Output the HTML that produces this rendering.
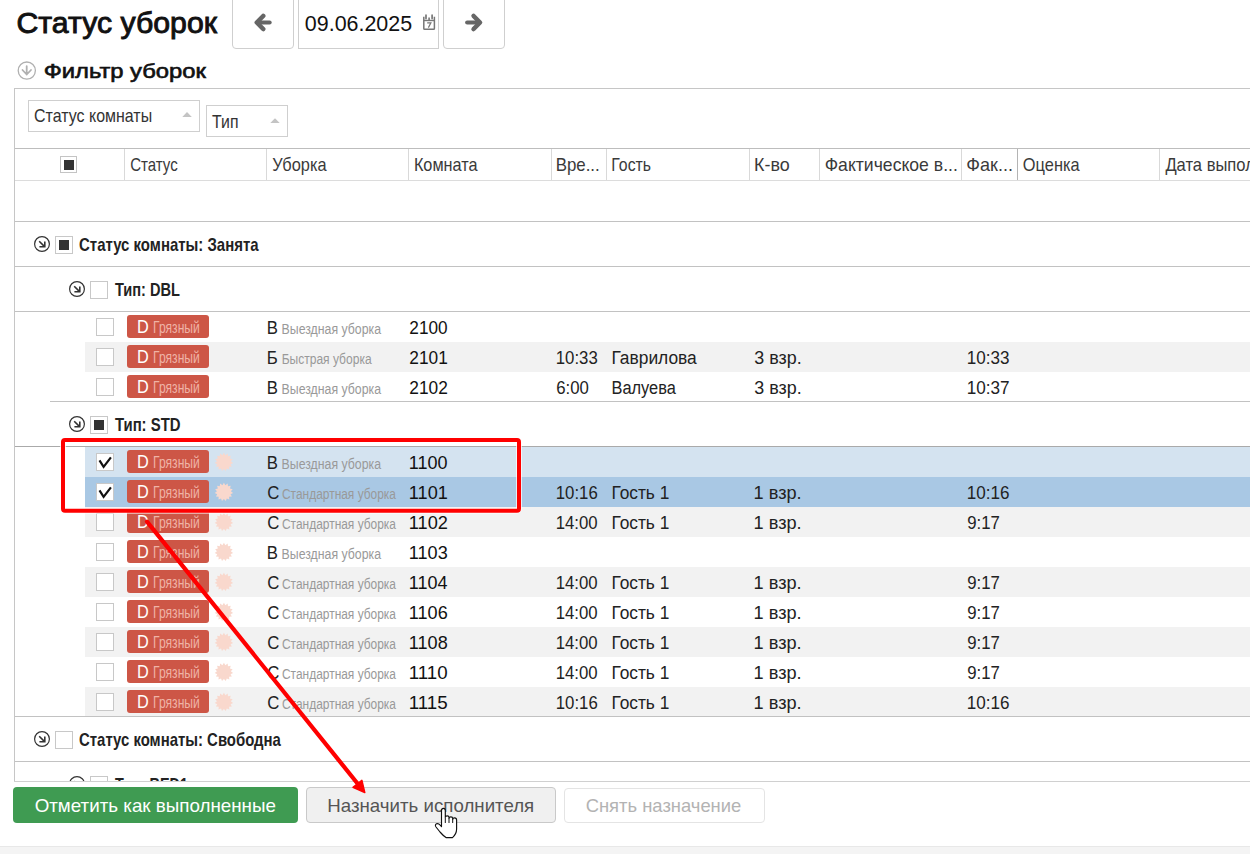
<!DOCTYPE html>
<html><head><meta charset="utf-8"><title>Статус уборок</title>
<style>
html,body{margin:0;padding:0;}
body{width:1250px;height:854px;overflow:hidden;position:relative;background:#fff;font-family:"Liberation Sans",sans-serif;}
#page div{position:absolute;}
#page > svg{position:absolute;left:0;top:0;}
#clip{position:absolute;left:0;top:0;width:1250px;height:781px;overflow:hidden;}
</style></head><body><div id="page">
<div id="clip">
<div style="left:232px;top:-6px;width:62px;height:55px;border:1px solid #cfcfcf;border-radius:4px;background:#fff;box-sizing:border-box"></div>
<div style="left:298px;top:-6px;width:141px;height:55px;border:1px solid #cfcfcf;background:#fff;box-sizing:border-box"></div>
<div style="left:443px;top:-6px;width:62px;height:55px;border:1px solid #cfcfcf;border-radius:4px;background:#fff;box-sizing:border-box"></div>
<div style="left:14px;top:88px;width:1300px;height:694px;border-left:1px solid #c6c6c6;border-top:1px solid #c6c6c6;box-sizing:border-box"></div>
<div style="left:27.5px;top:99.5px;width:172.5px;height:32px;border:1px solid #cfcfcf;box-sizing:border-box;background:#fff"></div>
<div style="left:205.5px;top:105px;width:82px;height:32px;border:1px solid #cfcfcf;box-sizing:border-box;background:#fff"></div>
<div style="left:15px;top:148px;width:1300px;height:1px;background:#bdbdbd"></div>
<div style="left:15px;top:180px;width:1300px;height:1px;background:#dcdcdc"></div>
<div style="left:124px;top:149px;width:1px;height:31px;background:#d9d9d9"></div>
<div style="left:266px;top:149px;width:1px;height:31px;background:#d9d9d9"></div>
<div style="left:408px;top:149px;width:1px;height:31px;background:#d9d9d9"></div>
<div style="left:550.5px;top:149px;width:1px;height:31px;background:#d9d9d9"></div>
<div style="left:606px;top:149px;width:1px;height:31px;background:#d9d9d9"></div>
<div style="left:748.5px;top:149px;width:1px;height:31px;background:#d9d9d9"></div>
<div style="left:819px;top:149px;width:1px;height:31px;background:#d9d9d9"></div>
<div style="left:961px;top:149px;width:1px;height:31px;background:#d9d9d9"></div>
<div style="left:1017px;top:149px;width:1px;height:31px;background:#b4b4b4"></div>
<div style="left:1159px;top:149px;width:1px;height:31px;background:#d9d9d9"></div>
<div style="left:60px;top:156px;width:17px;height:17px;border:1px solid #c4c4c4;box-sizing:border-box;background:#fff"></div>
<div style="left:63.6px;top:160px;width:10.2px;height:9.6px;background:#333"></div>
<div style="left:15px;top:221px;width:1300px;height:1px;background:#c2c2c2"></div>
<div style="left:55px;top:236px;width:17.5px;height:17.5px;border:1px solid #c8c8c8;box-sizing:border-box;background:#fff"></div>
<div style="left:58.8px;top:240px;width:10px;height:9.8px;background:#333"></div>
<div style="left:15px;top:266px;width:1300px;height:1px;background:#c2c2c2"></div>
<div style="left:90.2px;top:281px;width:17.5px;height:17.5px;border:1px solid #c8c8c8;box-sizing:border-box;background:#fff"></div>
<div style="left:15px;top:311px;width:1300px;height:1px;background:#c2c2c2"></div>
<div style="left:96.1px;top:318px;width:17.5px;height:17.5px;border:1px solid #c8c8c8;box-sizing:border-box;background:#fff"></div>
<div style="left:127px;top:315.3px;width:82px;height:22.5px;background:#cd5646;border-radius:3px"></div>
<div style="left:85px;top:342px;width:1300px;height:30px;background:#f2f2f2"></div>
<div style="left:96.1px;top:348px;width:17.5px;height:17.5px;border:1px solid #c8c8c8;box-sizing:border-box;background:#fff"></div>
<div style="left:127px;top:345.3px;width:82px;height:22.5px;background:#cd5646;border-radius:3px"></div>
<div style="left:96.1px;top:378px;width:17.5px;height:17.5px;border:1px solid #c8c8c8;box-sizing:border-box;background:#fff"></div>
<div style="left:127px;top:375.3px;width:82px;height:22.5px;background:#cd5646;border-radius:3px"></div>
<div style="left:50px;top:401px;width:1300px;height:1px;background:#c2c2c2"></div>
<div style="left:90.2px;top:416px;width:17.5px;height:17.5px;border:1px solid #c8c8c8;box-sizing:border-box;background:#fff"></div>
<div style="left:94.0px;top:420px;width:10px;height:9.8px;background:#333"></div>
<div style="left:15px;top:446px;width:1300px;height:1px;background:#aaaaaa"></div>
<div style="left:85px;top:447px;width:1300px;height:30px;background:#d4e3f0"></div>
<div style="left:96.1px;top:453px;width:17.5px;height:17.5px;border:1px solid #c8c8c8;box-sizing:border-box;background:#fff"></div>
<div style="left:127px;top:450.3px;width:82px;height:22.5px;background:#cd5646;border-radius:3px"></div>
<div style="left:85px;top:477px;width:1300px;height:30px;background:#a9c8e4"></div>
<div style="left:96.1px;top:483px;width:17.5px;height:17.5px;border:1px solid #c8c8c8;box-sizing:border-box;background:#fff"></div>
<div style="left:127px;top:480.3px;width:82px;height:22.5px;background:#cd5646;border-radius:3px"></div>
<div style="left:85px;top:507px;width:1300px;height:30px;background:#f2f2f2"></div>
<div style="left:96.1px;top:513px;width:17.5px;height:17.5px;border:1px solid #c8c8c8;box-sizing:border-box;background:#fff"></div>
<div style="left:127px;top:510.3px;width:82px;height:22.5px;background:#cd5646;border-radius:3px"></div>
<div style="left:96.1px;top:543px;width:17.5px;height:17.5px;border:1px solid #c8c8c8;box-sizing:border-box;background:#fff"></div>
<div style="left:127px;top:540.3px;width:82px;height:22.5px;background:#cd5646;border-radius:3px"></div>
<div style="left:85px;top:567px;width:1300px;height:30px;background:#f2f2f2"></div>
<div style="left:96.1px;top:573px;width:17.5px;height:17.5px;border:1px solid #c8c8c8;box-sizing:border-box;background:#fff"></div>
<div style="left:127px;top:570.3px;width:82px;height:22.5px;background:#cd5646;border-radius:3px"></div>
<div style="left:96.1px;top:603px;width:17.5px;height:17.5px;border:1px solid #c8c8c8;box-sizing:border-box;background:#fff"></div>
<div style="left:127px;top:600.3px;width:82px;height:22.5px;background:#cd5646;border-radius:3px"></div>
<div style="left:85px;top:627px;width:1300px;height:30px;background:#f2f2f2"></div>
<div style="left:96.1px;top:633px;width:17.5px;height:17.5px;border:1px solid #c8c8c8;box-sizing:border-box;background:#fff"></div>
<div style="left:127px;top:630.3px;width:82px;height:22.5px;background:#cd5646;border-radius:3px"></div>
<div style="left:96.1px;top:663px;width:17.5px;height:17.5px;border:1px solid #c8c8c8;box-sizing:border-box;background:#fff"></div>
<div style="left:127px;top:660.3px;width:82px;height:22.5px;background:#cd5646;border-radius:3px"></div>
<div style="left:85px;top:687px;width:1300px;height:30px;background:#f2f2f2"></div>
<div style="left:96.1px;top:693px;width:17.5px;height:17.5px;border:1px solid #c8c8c8;box-sizing:border-box;background:#fff"></div>
<div style="left:127px;top:690.3px;width:82px;height:22.5px;background:#cd5646;border-radius:3px"></div>
<div style="left:15px;top:716px;width:1300px;height:1px;background:#c2c2c2"></div>
<div style="left:55px;top:731px;width:17.5px;height:17.5px;border:1px solid #c8c8c8;box-sizing:border-box;background:#fff"></div>
<div style="left:15px;top:761px;width:1300px;height:1px;background:#c2c2c2"></div>
<div style="left:90.2px;top:776px;width:17.5px;height:17.5px;border:1px solid #c8c8c8;box-sizing:border-box;background:#fff"></div>
<svg width="1250" height="781" viewBox="0 0 1250 781" style="position:absolute;left:0;top:0" font-family="Liberation Sans, sans-serif">
<path d="M263.2 16 L256.8 22.5 L263.2 29" fill="none" stroke="#666" stroke-width="4.6" stroke-linecap="round" stroke-linejoin="round"/>
<path d="M258.0 22.5 H269.6" stroke="#666" stroke-width="4.2" stroke-linecap="round"/>
<path d="M473.6 16 L480.0 22.5 L473.6 29" fill="none" stroke="#666" stroke-width="4.6" stroke-linecap="round" stroke-linejoin="round"/>
<path d="M478.8 22.5 H467.2" stroke="#666" stroke-width="4.2" stroke-linecap="round"/>
<path d="M423.8 16.8 V28.4 Q423.8 29.2 424.6 29.2 H433.6 Q434.4 29.2 434.4 28.4 V16.8" fill="none" stroke="#777" stroke-width="1.5"/>
<path d="M423.8 20.5 H434.4" stroke="#777" stroke-width="1.4"/>
<path d="M426 15.2 V18.6 M432.1 15.2 V18.6" stroke="#777" stroke-width="1.7" stroke-linecap="round"/>
<path d="M429.1 17.4 V20.5" stroke="#777" stroke-width="1.6"/>
<path d="M427.2 22.8 H430.9 L428.4 27.6" fill="none" stroke="#777" stroke-width="1.2"/>
<circle cx="26.8" cy="70.6" r="8.6" fill="none" stroke="#b0b0b0" stroke-width="1.3"/>
<path d="M26.7 66.2 V74.5 M22.5 70 L26.7 74.5 L31 70" fill="none" stroke="#b0b0b0" stroke-width="1.8" stroke-linecap="round" stroke-linejoin="round"/>
<path d="M182.3 117 L187 112 L191.8 117 Z" fill="#c4c4c4"/>
<path d="M270.3 123 L275 118.3 L279.7 123 Z" fill="#c4c4c4"/>
<circle cx="42" cy="244" r="7.4" fill="none" stroke="#333" stroke-width="1.2"/>
<path d="M39.2 241.2 L44.6 246.6 M44.8 241.4 V246.8 H39.4" fill="none" stroke="#333" stroke-width="1.6"/>
<circle cx="77" cy="289" r="7.4" fill="none" stroke="#333" stroke-width="1.2"/>
<path d="M74.2 286.2 L79.6 291.6 M79.8 286.4 V291.8 H74.4" fill="none" stroke="#333" stroke-width="1.6"/>
<circle cx="77" cy="424" r="7.4" fill="none" stroke="#333" stroke-width="1.2"/>
<path d="M74.2 421.2 L79.6 426.6 M79.8 421.4 V426.8 H74.4" fill="none" stroke="#333" stroke-width="1.6"/>
<path d="M99.5 460.4 L103.6 466.9 L110.89999999999999 457.3" fill="none" stroke="#111" stroke-width="2.2" stroke-linejoin="miter"/>
<polygon points="223.90,452.80 225.36,455.15 227.64,453.60 228.01,456.34 230.74,455.84 229.96,458.50 232.65,459.16 230.86,461.27 233.05,462.96 230.56,464.16 231.87,466.60 229.10,466.68 229.31,469.44 226.75,468.39 225.81,471.00 223.90,469.00 221.99,471.00 221.05,468.39 218.49,469.44 218.70,466.68 215.93,466.60 217.24,464.16 214.75,462.96 216.94,461.27 215.15,459.16 217.84,458.50 217.06,455.84 219.79,456.34 220.16,453.60 222.44,455.15" fill="#f9d8cd"/>
<path d="M99.5 490.4 L103.6 496.9 L110.89999999999999 487.3" fill="none" stroke="#111" stroke-width="2.2" stroke-linejoin="miter"/>
<polygon points="223.90,482.80 225.36,485.15 227.64,483.60 228.01,486.34 230.74,485.84 229.96,488.50 232.65,489.16 230.86,491.27 233.05,492.96 230.56,494.16 231.87,496.60 229.10,496.68 229.31,499.44 226.75,498.39 225.81,501.00 223.90,499.00 221.99,501.00 221.05,498.39 218.49,499.44 218.70,496.68 215.93,496.60 217.24,494.16 214.75,492.96 216.94,491.27 215.15,489.16 217.84,488.50 217.06,485.84 219.79,486.34 220.16,483.60 222.44,485.15" fill="#f9d8cd"/>
<polygon points="223.90,512.80 225.36,515.15 227.64,513.60 228.01,516.34 230.74,515.84 229.96,518.50 232.65,519.16 230.86,521.27 233.05,522.96 230.56,524.16 231.87,526.60 229.10,526.68 229.31,529.44 226.75,528.39 225.81,531.00 223.90,529.00 221.99,531.00 221.05,528.39 218.49,529.44 218.70,526.68 215.93,526.60 217.24,524.16 214.75,522.96 216.94,521.27 215.15,519.16 217.84,518.50 217.06,515.84 219.79,516.34 220.16,513.60 222.44,515.15" fill="#f9d8cd"/>
<polygon points="223.90,542.80 225.36,545.15 227.64,543.60 228.01,546.34 230.74,545.84 229.96,548.50 232.65,549.16 230.86,551.27 233.05,552.96 230.56,554.16 231.87,556.60 229.10,556.68 229.31,559.44 226.75,558.39 225.81,561.00 223.90,559.00 221.99,561.00 221.05,558.39 218.49,559.44 218.70,556.68 215.93,556.60 217.24,554.16 214.75,552.96 216.94,551.27 215.15,549.16 217.84,548.50 217.06,545.84 219.79,546.34 220.16,543.60 222.44,545.15" fill="#f9d8cd"/>
<polygon points="223.90,572.80 225.36,575.15 227.64,573.60 228.01,576.34 230.74,575.84 229.96,578.50 232.65,579.16 230.86,581.27 233.05,582.96 230.56,584.16 231.87,586.60 229.10,586.68 229.31,589.44 226.75,588.39 225.81,591.00 223.90,589.00 221.99,591.00 221.05,588.39 218.49,589.44 218.70,586.68 215.93,586.60 217.24,584.16 214.75,582.96 216.94,581.27 215.15,579.16 217.84,578.50 217.06,575.84 219.79,576.34 220.16,573.60 222.44,575.15" fill="#f9d8cd"/>
<polygon points="223.90,602.80 225.36,605.15 227.64,603.60 228.01,606.34 230.74,605.84 229.96,608.50 232.65,609.16 230.86,611.27 233.05,612.96 230.56,614.16 231.87,616.60 229.10,616.68 229.31,619.44 226.75,618.39 225.81,621.00 223.90,619.00 221.99,621.00 221.05,618.39 218.49,619.44 218.70,616.68 215.93,616.60 217.24,614.16 214.75,612.96 216.94,611.27 215.15,609.16 217.84,608.50 217.06,605.84 219.79,606.34 220.16,603.60 222.44,605.15" fill="#f9d8cd"/>
<polygon points="223.90,632.80 225.36,635.15 227.64,633.60 228.01,636.34 230.74,635.84 229.96,638.50 232.65,639.16 230.86,641.27 233.05,642.96 230.56,644.16 231.87,646.60 229.10,646.68 229.31,649.44 226.75,648.39 225.81,651.00 223.90,649.00 221.99,651.00 221.05,648.39 218.49,649.44 218.70,646.68 215.93,646.60 217.24,644.16 214.75,642.96 216.94,641.27 215.15,639.16 217.84,638.50 217.06,635.84 219.79,636.34 220.16,633.60 222.44,635.15" fill="#f9d8cd"/>
<polygon points="223.90,662.80 225.36,665.15 227.64,663.60 228.01,666.34 230.74,665.84 229.96,668.50 232.65,669.16 230.86,671.27 233.05,672.96 230.56,674.16 231.87,676.60 229.10,676.68 229.31,679.44 226.75,678.39 225.81,681.00 223.90,679.00 221.99,681.00 221.05,678.39 218.49,679.44 218.70,676.68 215.93,676.60 217.24,674.16 214.75,672.96 216.94,671.27 215.15,669.16 217.84,668.50 217.06,665.84 219.79,666.34 220.16,663.60 222.44,665.15" fill="#f9d8cd"/>
<polygon points="223.90,692.80 225.36,695.15 227.64,693.60 228.01,696.34 230.74,695.84 229.96,698.50 232.65,699.16 230.86,701.27 233.05,702.96 230.56,704.16 231.87,706.60 229.10,706.68 229.31,709.44 226.75,708.39 225.81,711.00 223.90,709.00 221.99,711.00 221.05,708.39 218.49,709.44 218.70,706.68 215.93,706.60 217.24,704.16 214.75,702.96 216.94,701.27 215.15,699.16 217.84,698.50 217.06,695.84 219.79,696.34 220.16,693.60 222.44,695.15" fill="#f9d8cd"/>
<circle cx="42" cy="739" r="7.4" fill="none" stroke="#333" stroke-width="1.2"/>
<path d="M39.2 736.2 L44.6 741.6 M44.8 736.4 V741.8 H39.4" fill="none" stroke="#333" stroke-width="1.6"/>
<circle cx="77" cy="784" r="7.4" fill="none" stroke="#333" stroke-width="1.2"/>
<path d="M74.2 781.2 L79.6 786.6 M79.8 781.4 V786.8 H74.4" fill="none" stroke="#333" stroke-width="1.6"/>
<text x="16.49" y="33.00" font-size="29" fill="#111" stroke="#111" stroke-width="0.9" textLength="200.48" lengthAdjust="spacingAndGlyphs">Статус уборок</text>
<text x="304.84" y="30.70" font-size="22" fill="#111" textLength="107.32" lengthAdjust="spacingAndGlyphs">09.06.2025</text>
<text x="43.69" y="78.00" font-size="19.5" fill="#111" stroke="#111" stroke-width="0.6" textLength="162.24" lengthAdjust="spacingAndGlyphs">Фильтр уборок</text>
<text x="34.10" y="122.40" font-size="19" fill="#333" textLength="118.01" lengthAdjust="spacingAndGlyphs">Статус комнаты</text>
<text x="212.08" y="128.00" font-size="18.4" fill="#333" textLength="26.38" lengthAdjust="spacingAndGlyphs">Тип</text>
<text x="130.15" y="171.10" font-size="17.8" fill="#3a3a3a" textLength="47.55" lengthAdjust="spacingAndGlyphs">Статус</text>
<text x="272.31" y="171.10" font-size="17.8" fill="#3a3a3a" textLength="54.27" lengthAdjust="spacingAndGlyphs">Уборка</text>
<text x="413.90" y="171.10" font-size="17.8" fill="#3a3a3a" textLength="63.71" lengthAdjust="spacingAndGlyphs">Комната</text>
<text x="555.65" y="171.10" font-size="17.8" fill="#3a3a3a" textLength="44.12" lengthAdjust="spacingAndGlyphs">Вре...</text>
<text x="611.33" y="171.10" font-size="17.8" fill="#3a3a3a" textLength="39.70" lengthAdjust="spacingAndGlyphs">Гость</text>
<text x="754.07" y="171.10" font-size="17.8" fill="#3a3a3a" textLength="35.68" lengthAdjust="spacingAndGlyphs">К-во</text>
<text x="824.73" y="171.10" font-size="17.8" fill="#3a3a3a" textLength="133.10" lengthAdjust="spacingAndGlyphs">Фактическое в...</text>
<text x="966.31" y="171.10" font-size="17.8" fill="#3a3a3a" textLength="46.66" lengthAdjust="spacingAndGlyphs">Фак...</text>
<text x="1022.86" y="171.10" font-size="17.8" fill="#3a3a3a" textLength="56.69" lengthAdjust="spacingAndGlyphs">Оценка</text>
<text x="1165.42" y="171.10" font-size="17.8" fill="#3a3a3a" textLength="135.12" lengthAdjust="spacingAndGlyphs">Дата выполнения</text>
<text x="79.00" y="251.40" font-size="19" fill="#222" font-weight="700" textLength="179.60" lengthAdjust="spacingAndGlyphs">Статус комнаты: Занята</text>
<text x="114.95" y="296.00" font-size="19" fill="#222" font-weight="700" textLength="65.02" lengthAdjust="spacingAndGlyphs">Тип: DBL</text>
<text x="137.00" y="333.00" font-size="18" fill="#fff" textLength="11.77" lengthAdjust="spacingAndGlyphs">D</text>
<text x="153.03" y="333.00" font-size="16" fill="#efb3a6" textLength="46.82" lengthAdjust="spacingAndGlyphs">Грязный</text>
<text x="266.86" y="334.00" font-size="18" fill="#222" textLength="11.17" lengthAdjust="spacingAndGlyphs">В</text>
<text x="281.62" y="334.00" font-size="14" fill="#999" textLength="99.38" lengthAdjust="spacingAndGlyphs">Выездная уборка</text>
<text x="409.34" y="334.00" font-size="17.8" fill="#111" textLength="38.26" lengthAdjust="spacingAndGlyphs">2100</text>
<text x="137.00" y="363.00" font-size="18" fill="#fff" textLength="11.77" lengthAdjust="spacingAndGlyphs">D</text>
<text x="153.03" y="363.00" font-size="16" fill="#efb3a6" textLength="46.82" lengthAdjust="spacingAndGlyphs">Грязный</text>
<text x="266.86" y="364.00" font-size="18" fill="#222" textLength="10.99" lengthAdjust="spacingAndGlyphs">Б</text>
<text x="281.64" y="364.00" font-size="14" fill="#999" textLength="89.98" lengthAdjust="spacingAndGlyphs">Быстрая уборка</text>
<text x="409.34" y="364.00" font-size="17.8" fill="#111" textLength="38.44" lengthAdjust="spacingAndGlyphs">2101</text>
<text x="555.74" y="364.00" font-size="18" fill="#222" textLength="41.97" lengthAdjust="spacingAndGlyphs">10:33</text>
<text x="611.41" y="364.00" font-size="18" fill="#222" textLength="85.38" lengthAdjust="spacingAndGlyphs">Гаврилова</text>
<text x="754.28" y="364.00" font-size="18" fill="#222" textLength="47.35" lengthAdjust="spacingAndGlyphs">3 взр.</text>
<text x="966.72" y="364.00" font-size="18" fill="#222" textLength="42.71" lengthAdjust="spacingAndGlyphs">10:33</text>
<text x="137.00" y="393.00" font-size="18" fill="#fff" textLength="11.77" lengthAdjust="spacingAndGlyphs">D</text>
<text x="153.03" y="393.00" font-size="16" fill="#efb3a6" textLength="46.82" lengthAdjust="spacingAndGlyphs">Грязный</text>
<text x="266.86" y="394.00" font-size="18" fill="#222" textLength="11.17" lengthAdjust="spacingAndGlyphs">В</text>
<text x="281.62" y="394.00" font-size="14" fill="#999" textLength="99.38" lengthAdjust="spacingAndGlyphs">Выездная уборка</text>
<text x="409.33" y="394.00" font-size="17.8" fill="#111" textLength="38.53" lengthAdjust="spacingAndGlyphs">2102</text>
<text x="556.16" y="394.00" font-size="18" fill="#222" textLength="32.65" lengthAdjust="spacingAndGlyphs">6:00</text>
<text x="611.49" y="394.00" font-size="18" fill="#222" textLength="64.36" lengthAdjust="spacingAndGlyphs">Валуева</text>
<text x="754.28" y="394.00" font-size="18" fill="#222" textLength="47.35" lengthAdjust="spacingAndGlyphs">3 взр.</text>
<text x="966.71" y="394.00" font-size="18" fill="#222" textLength="42.88" lengthAdjust="spacingAndGlyphs">10:37</text>
<text x="114.95" y="431.00" font-size="19" fill="#222" font-weight="700" textLength="65.58" lengthAdjust="spacingAndGlyphs">Тип: STD</text>
<text x="137.00" y="468.00" font-size="18" fill="#fff" textLength="11.77" lengthAdjust="spacingAndGlyphs">D</text>
<text x="153.03" y="468.00" font-size="16" fill="#efb3a6" textLength="46.82" lengthAdjust="spacingAndGlyphs">Грязный</text>
<text x="266.86" y="469.00" font-size="18" fill="#222" textLength="11.17" lengthAdjust="spacingAndGlyphs">В</text>
<text x="281.62" y="469.00" font-size="14" fill="#999" textLength="99.38" lengthAdjust="spacingAndGlyphs">Выездная уборка</text>
<text x="408.85" y="469.00" font-size="17.8" fill="#111" textLength="38.79" lengthAdjust="spacingAndGlyphs">1100</text>
<text x="137.00" y="498.00" font-size="18" fill="#fff" textLength="11.77" lengthAdjust="spacingAndGlyphs">D</text>
<text x="153.03" y="498.00" font-size="16" fill="#efb3a6" textLength="46.82" lengthAdjust="spacingAndGlyphs">Грязный</text>
<text x="267.36" y="499.00" font-size="18" fill="#222" textLength="12.09" lengthAdjust="spacingAndGlyphs">С</text>
<text x="282.00" y="499.00" font-size="14" fill="#999" textLength="113.99" lengthAdjust="spacingAndGlyphs">Стандартная уборка</text>
<text x="408.84" y="499.00" font-size="17.8" fill="#111" textLength="38.98" lengthAdjust="spacingAndGlyphs">1101</text>
<text x="555.74" y="499.00" font-size="18" fill="#222" textLength="41.97" lengthAdjust="spacingAndGlyphs">10:16</text>
<text x="611.41" y="499.00" font-size="18" fill="#222" textLength="57.95" lengthAdjust="spacingAndGlyphs">Гость 1</text>
<text x="753.64" y="499.00" font-size="18" fill="#222" textLength="48.02" lengthAdjust="spacingAndGlyphs">1 взр.</text>
<text x="966.72" y="499.00" font-size="18" fill="#222" textLength="42.71" lengthAdjust="spacingAndGlyphs">10:16</text>
<text x="137.00" y="528.00" font-size="18" fill="#fff" textLength="11.77" lengthAdjust="spacingAndGlyphs">D</text>
<text x="153.03" y="528.00" font-size="16" fill="#efb3a6" textLength="46.82" lengthAdjust="spacingAndGlyphs">Грязный</text>
<text x="267.36" y="529.00" font-size="18" fill="#222" textLength="12.09" lengthAdjust="spacingAndGlyphs">С</text>
<text x="282.00" y="529.00" font-size="14" fill="#999" textLength="113.99" lengthAdjust="spacingAndGlyphs">Стандартная уборка</text>
<text x="408.84" y="529.00" font-size="17.8" fill="#111" textLength="39.08" lengthAdjust="spacingAndGlyphs">1102</text>
<text x="555.74" y="529.00" font-size="18" fill="#222" textLength="41.88" lengthAdjust="spacingAndGlyphs">14:00</text>
<text x="611.41" y="529.00" font-size="18" fill="#222" textLength="57.95" lengthAdjust="spacingAndGlyphs">Гость 1</text>
<text x="753.64" y="529.00" font-size="18" fill="#222" textLength="48.02" lengthAdjust="spacingAndGlyphs">1 взр.</text>
<text x="967.25" y="529.00" font-size="18" fill="#222" textLength="32.61" lengthAdjust="spacingAndGlyphs">9:17</text>
<text x="137.00" y="558.00" font-size="18" fill="#fff" textLength="11.77" lengthAdjust="spacingAndGlyphs">D</text>
<text x="153.03" y="558.00" font-size="16" fill="#efb3a6" textLength="46.82" lengthAdjust="spacingAndGlyphs">Грязный</text>
<text x="266.86" y="559.00" font-size="18" fill="#222" textLength="11.17" lengthAdjust="spacingAndGlyphs">В</text>
<text x="281.62" y="559.00" font-size="14" fill="#999" textLength="99.38" lengthAdjust="spacingAndGlyphs">Выездная уборка</text>
<text x="408.84" y="559.00" font-size="17.8" fill="#111" textLength="38.89" lengthAdjust="spacingAndGlyphs">1103</text>
<text x="137.00" y="588.00" font-size="18" fill="#fff" textLength="11.77" lengthAdjust="spacingAndGlyphs">D</text>
<text x="153.03" y="588.00" font-size="16" fill="#efb3a6" textLength="46.82" lengthAdjust="spacingAndGlyphs">Грязный</text>
<text x="267.36" y="589.00" font-size="18" fill="#222" textLength="12.09" lengthAdjust="spacingAndGlyphs">С</text>
<text x="282.00" y="589.00" font-size="14" fill="#999" textLength="113.99" lengthAdjust="spacingAndGlyphs">Стандартная уборка</text>
<text x="408.85" y="589.00" font-size="17.8" fill="#111" textLength="38.70" lengthAdjust="spacingAndGlyphs">1104</text>
<text x="555.74" y="589.00" font-size="18" fill="#222" textLength="41.88" lengthAdjust="spacingAndGlyphs">14:00</text>
<text x="611.41" y="589.00" font-size="18" fill="#222" textLength="57.95" lengthAdjust="spacingAndGlyphs">Гость 1</text>
<text x="753.64" y="589.00" font-size="18" fill="#222" textLength="48.02" lengthAdjust="spacingAndGlyphs">1 взр.</text>
<text x="967.25" y="589.00" font-size="18" fill="#222" textLength="32.61" lengthAdjust="spacingAndGlyphs">9:17</text>
<text x="137.00" y="618.00" font-size="18" fill="#fff" textLength="11.77" lengthAdjust="spacingAndGlyphs">D</text>
<text x="153.03" y="618.00" font-size="16" fill="#efb3a6" textLength="46.82" lengthAdjust="spacingAndGlyphs">Грязный</text>
<text x="267.36" y="619.00" font-size="18" fill="#222" textLength="12.09" lengthAdjust="spacingAndGlyphs">С</text>
<text x="282.00" y="619.00" font-size="14" fill="#999" textLength="113.99" lengthAdjust="spacingAndGlyphs">Стандартная уборка</text>
<text x="408.84" y="619.00" font-size="17.8" fill="#111" textLength="38.89" lengthAdjust="spacingAndGlyphs">1106</text>
<text x="555.74" y="619.00" font-size="18" fill="#222" textLength="41.88" lengthAdjust="spacingAndGlyphs">14:00</text>
<text x="611.41" y="619.00" font-size="18" fill="#222" textLength="57.95" lengthAdjust="spacingAndGlyphs">Гость 1</text>
<text x="753.64" y="619.00" font-size="18" fill="#222" textLength="48.02" lengthAdjust="spacingAndGlyphs">1 взр.</text>
<text x="967.25" y="619.00" font-size="18" fill="#222" textLength="32.61" lengthAdjust="spacingAndGlyphs">9:17</text>
<text x="137.00" y="648.00" font-size="18" fill="#fff" textLength="11.77" lengthAdjust="spacingAndGlyphs">D</text>
<text x="153.03" y="648.00" font-size="16" fill="#efb3a6" textLength="46.82" lengthAdjust="spacingAndGlyphs">Грязный</text>
<text x="267.36" y="649.00" font-size="18" fill="#222" textLength="12.09" lengthAdjust="spacingAndGlyphs">С</text>
<text x="282.00" y="649.00" font-size="14" fill="#999" textLength="113.99" lengthAdjust="spacingAndGlyphs">Стандартная уборка</text>
<text x="408.84" y="649.00" font-size="17.8" fill="#111" textLength="38.89" lengthAdjust="spacingAndGlyphs">1108</text>
<text x="555.74" y="649.00" font-size="18" fill="#222" textLength="41.88" lengthAdjust="spacingAndGlyphs">14:00</text>
<text x="611.41" y="649.00" font-size="18" fill="#222" textLength="57.95" lengthAdjust="spacingAndGlyphs">Гость 1</text>
<text x="753.64" y="649.00" font-size="18" fill="#222" textLength="48.02" lengthAdjust="spacingAndGlyphs">1 взр.</text>
<text x="967.25" y="649.00" font-size="18" fill="#222" textLength="32.61" lengthAdjust="spacingAndGlyphs">9:17</text>
<text x="137.00" y="678.00" font-size="18" fill="#fff" textLength="11.77" lengthAdjust="spacingAndGlyphs">D</text>
<text x="153.03" y="678.00" font-size="16" fill="#efb3a6" textLength="46.82" lengthAdjust="spacingAndGlyphs">Грязный</text>
<text x="267.36" y="679.00" font-size="18" fill="#222" textLength="12.09" lengthAdjust="spacingAndGlyphs">С</text>
<text x="282.00" y="679.00" font-size="14" fill="#999" textLength="113.99" lengthAdjust="spacingAndGlyphs">Стандартная уборка</text>
<text x="408.80" y="679.00" font-size="17.8" fill="#111" textLength="38.88" lengthAdjust="spacingAndGlyphs">1110</text>
<text x="555.74" y="679.00" font-size="18" fill="#222" textLength="41.88" lengthAdjust="spacingAndGlyphs">14:00</text>
<text x="611.41" y="679.00" font-size="18" fill="#222" textLength="57.95" lengthAdjust="spacingAndGlyphs">Гость 1</text>
<text x="753.64" y="679.00" font-size="18" fill="#222" textLength="48.02" lengthAdjust="spacingAndGlyphs">1 взр.</text>
<text x="967.25" y="679.00" font-size="18" fill="#222" textLength="32.61" lengthAdjust="spacingAndGlyphs">9:17</text>
<text x="137.00" y="708.00" font-size="18" fill="#fff" textLength="11.77" lengthAdjust="spacingAndGlyphs">D</text>
<text x="153.03" y="708.00" font-size="16" fill="#efb3a6" textLength="46.82" lengthAdjust="spacingAndGlyphs">Грязный</text>
<text x="267.36" y="709.00" font-size="18" fill="#222" textLength="12.09" lengthAdjust="spacingAndGlyphs">С</text>
<text x="282.00" y="709.00" font-size="14" fill="#999" textLength="113.99" lengthAdjust="spacingAndGlyphs">Стандартная уборка</text>
<text x="408.79" y="709.00" font-size="17.8" fill="#111" textLength="38.98" lengthAdjust="spacingAndGlyphs">1115</text>
<text x="555.74" y="709.00" font-size="18" fill="#222" textLength="41.97" lengthAdjust="spacingAndGlyphs">10:16</text>
<text x="611.41" y="709.00" font-size="18" fill="#222" textLength="57.95" lengthAdjust="spacingAndGlyphs">Гость 1</text>
<text x="753.64" y="709.00" font-size="18" fill="#222" textLength="48.02" lengthAdjust="spacingAndGlyphs">1 взр.</text>
<text x="966.72" y="709.00" font-size="18" fill="#222" textLength="42.71" lengthAdjust="spacingAndGlyphs">10:16</text>
<text x="79.00" y="746.40" font-size="19" fill="#222" font-weight="700" textLength="201.88" lengthAdjust="spacingAndGlyphs">Статус комнаты: Свободна</text>
<text x="114.96" y="791.00" font-size="19" fill="#222" font-weight="700" textLength="73.10" lengthAdjust="spacingAndGlyphs">Тип: BED1</text>
</svg>
</div>
<div style="left:14px;top:781px;width:1236px;height:1px;background:#d0d0d0"></div>
<div style="left:13px;top:787px;width:285px;height:36px;background:#3f9b52;border-radius:4px"></div>
<div style="left:306px;top:787px;width:249.5px;height:36px;background:#f0f0f0;border:1px solid #c9c9c9;border-radius:4px;box-sizing:border-box"></div>
<div style="left:564px;top:787.5px;width:201px;height:35.5px;background:#fff;border:1px solid #e4e4e4;border-radius:4px;box-sizing:border-box"></div>
<div style="left:0;top:846px;width:1250px;height:8px;background:#f4f4f4;border-top:1px solid #e8e8e8;box-sizing:border-box"></div>
<svg width="1250" height="854" viewBox="0 0 1250 854" style="position:absolute;left:0;top:0" font-family="Liberation Sans, sans-serif">
<text x="34.66" y="811.80" font-size="19" fill="#fff" textLength="241.24" lengthAdjust="spacingAndGlyphs">Отметить как выполненные</text>
<text x="327.30" y="811.90" font-size="19" fill="#555" textLength="206.95" lengthAdjust="spacingAndGlyphs">Назначить исполнителя</text>
<text x="585.68" y="811.90" font-size="19" fill="#b3b3b3" textLength="155.63" lengthAdjust="spacingAndGlyphs">Снять назначение</text>
<rect x="63" y="440" width="456" height="70.7" rx="2" fill="none" stroke="#fff" stroke-width="6" opacity="0.7"/>
<rect x="63" y="440" width="456" height="70.7" rx="2" fill="none" stroke="#ff0000" stroke-width="4"/>
<path d="M147 521.6 L357.5 783.5" stroke="#ff0000" stroke-width="4.2" stroke-linecap="round"/>
<path d="M353 787.4 L361.9 780.4 L364.8 792.6 Z" fill="#ff0000" stroke="#ff0000" stroke-width="1.5" stroke-linejoin="round"/>
<path d="M441.5 823 V810.5 Q441.5 808.3 443.4 808.3 Q445.3 808.3 445.3 810.5 V817.2 Q445.3 815.8 447.2 815.8 Q449 815.8 449 817.6 V818.5 Q449 816.8 450.9 816.8 Q452.7 816.8 452.7 818.6 V819.5 Q452.7 817.8 454.6 817.8 Q456.6 817.8 456.6 820 V829 Q456.6 834 452.5 837.6 H446 Q443.5 836 440 832 L436 827 Q434.6 824.8 436.5 823.8 Q438.4 823 440.2 825.2 L441.5 826.6 Z" fill="#fff" stroke="#111" stroke-width="1.15" stroke-linejoin="round"/>
<path d="M445.3 817.5 V823 M449 818.5 V823 M452.7 819.5 V823" stroke="#111" stroke-width="1"/>
</svg>
</div></body></html>
